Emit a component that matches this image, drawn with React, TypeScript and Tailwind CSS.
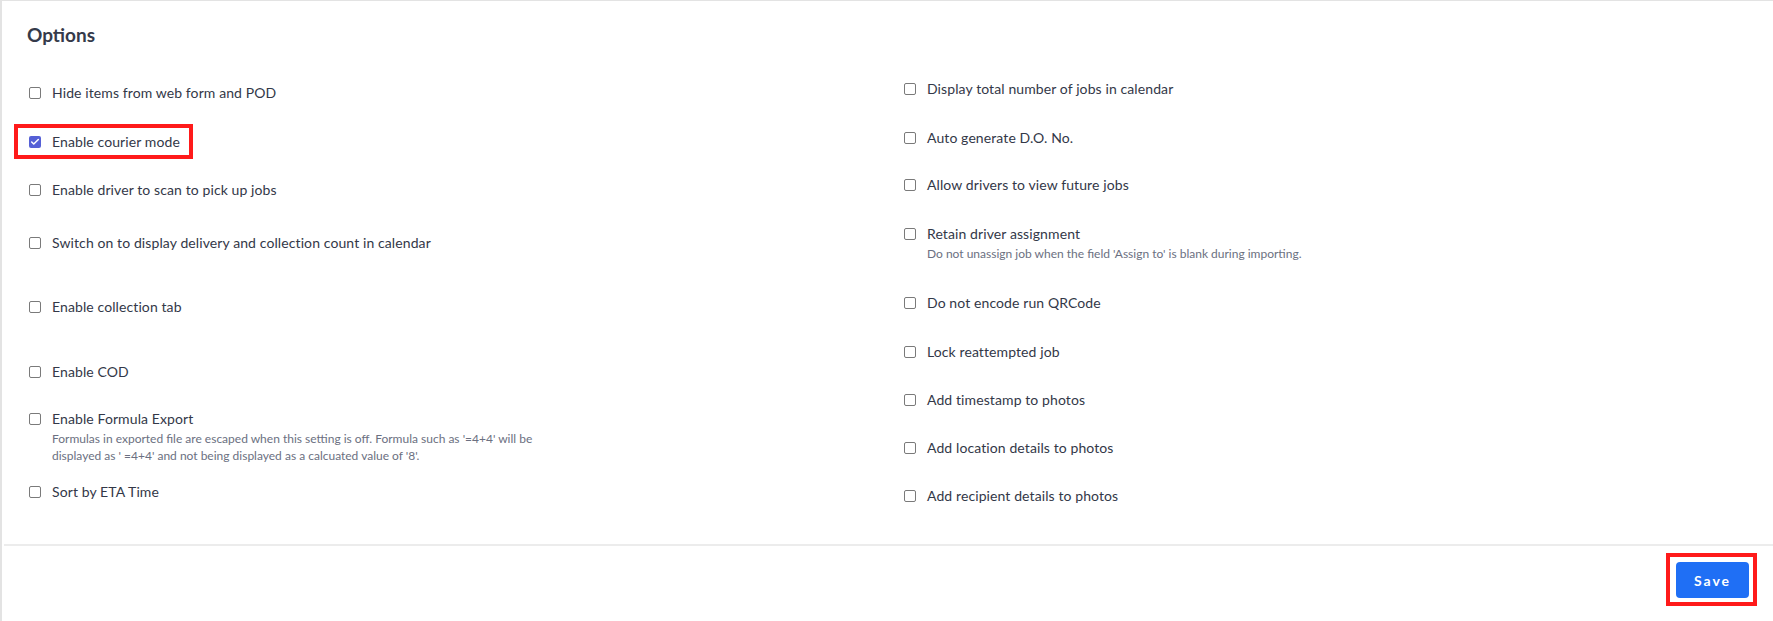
import { Check } from 'lucide-react';

type Option = {
  label: string;
  space: string;
  checked?: boolean;
  marked?: boolean;
  desc?: string;
  descWidth?: string;
};

const leftOptions: Option[] = [
  { label: 'Hide items from web form and POD', space: 'mt-0' },
  { label: 'Enable courier mode', space: 'mt-[29px]', checked: true, marked: true },
  { label: 'Enable driver to scan to pick up jobs', space: 'mt-[28px]' },
  { label: 'Switch on to display delivery and collection count in calendar', space: 'mt-[33px]' },
  { label: 'Enable collection tab', space: 'mt-[44px]' },
  { label: 'Enable COD', space: 'mt-[45px]' },
  {
    label: 'Enable Formula Export',
    space: 'mt-[27px]',
    desc: "Formulas in exported file are escaped when this setting is off. Formula such as '=4+4' will be displayed as ' =4+4' and not being displayed as a calcuated value of '8'.",
    descWidth: 'max-w-[520px]',
  },
  { label: 'Sort by ETA Time', space: 'mt-[18px]' },
];

const rightOptions: Option[] = [
  { label: 'Display total number of jobs in calendar', space: 'mt-0' },
  { label: 'Auto generate D.O. No.', space: 'mt-[29px]' },
  { label: 'Allow drivers to view future jobs', space: 'mt-[27px]' },
  {
    label: 'Retain driver assignment',
    space: 'mt-[29px]',
    desc: "Do not unassign job when the field 'Assign to' is blank during importing.",
  },
  { label: 'Do not encode run QRCode', space: 'mt-[31px]' },
  { label: 'Lock reattempted job', space: 'mt-[29px]' },
  { label: 'Add timestamp to photos', space: 'mt-[28px]' },
  { label: 'Add location details to photos', space: 'mt-[28px]' },
  { label: 'Add recipient details to photos', space: 'mt-[28px]' },
];

function Box({ checked }: { checked?: boolean }) {
  if (checked) {
    return (
      <span className="ml-[2px] w-3 h-3 shrink-0 rounded-[2px] bg-[#5560d6] flex items-center justify-center">
        <Check className="w-[10px] h-[10px] text-white" strokeWidth={3.5} />
      </span>
    );
  }
  return <span className="ml-[2px] w-3 h-3 shrink-0 rounded-[2px] border border-[#7a7a7a] bg-white" />;
}

function OptionItem({ opt }: { opt: Option }) {
  return (
    <div className={`relative ${opt.space}`}>
      <label className="flex items-center gap-[11px] h-5 cursor-pointer">
        <Box checked={opt.checked} />
        <span className="text-[14px] tracking-[0.1px] leading-5 text-[#333848]">{opt.label}</span>
      </label>
      {opt.desc && (
        <p className={`ml-[25px] mt-[1px] text-[12px] leading-[17px] text-[#6b7081] ${opt.descWidth ?? ''}`}>
          {opt.desc}
        </p>
      )}
      {/* annotation */}
      {opt.marked && (
        <span className="absolute -left-[13px] -top-[8px] w-[179px] h-[35px] border-4 border-[#ff1a1a] pointer-events-none" />
      )}
    </div>
  );
}

export default function App() {
  return (
    <div
      className="w-full h-[621px] bg-white border-l-2 border-t border-[#e3e3e3] flex flex-col"
      style={{ fontFamily: 'Lato, "Noto Sans", sans-serif' }}
    >
      {/* Options */}
      <div className="h-[543px] pl-[25px] pt-[20px]">
        <h2 className="text-[19px] leading-7 font-bold text-[#353a4a]">Options</h2>
        <div className="flex mt-[30px]">
          <div className="w-[875px] pt-1">
            {leftOptions.map((o) => (
              <OptionItem key={o.label} opt={o} />
            ))}
          </div>
          <div className="flex-1">
            {rightOptions.map((o) => (
              <OptionItem key={o.label} opt={o} />
            ))}
          </div>
        </div>
      </div>

      <div className="ml-[2px] h-[2px] bg-[#ececec]" />

      {/* Footer */}
      <div className="flex justify-end pt-4 pr-6">
        <div className="relative">
          <button className="w-[73px] h-9 rounded bg-[#1f6ff5] text-white text-[14px] font-bold tracking-[0.14em]">
            Save
          </button>
          <span className="absolute -left-[10px] -top-[9px] w-[91px] h-[53px] border-4 border-[#ff1a1a] pointer-events-none" />
        </div>
      </div>
    </div>
  );
}
